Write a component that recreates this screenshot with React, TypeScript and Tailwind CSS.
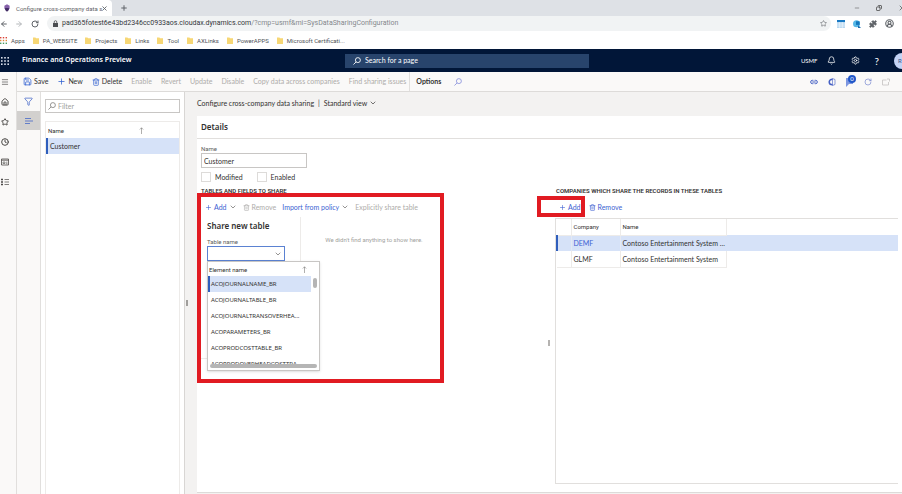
import { useState } from "react";
import type { ReactNode } from "react";
import {
  ArrowLeft,
  ArrowRight,
  Bell,
  ChevronDown,
  CircleUserRound,
  Clock,
  Copy,
  Funnel,
  House,
  Link2,
  Menu,
  Minus,
  Plus,
  Puzzle,
  RotateCw,
  Save,
  Settings,
  Star,
  Trash2,
  X,
} from "lucide-react";

const bookmarks = [
  "PA_WEBSITE",
  "Projects",
  "Links",
  "Tool",
  "AXLinks",
  "PowerAPPS",
  "Microsoft Certificati...",
];

const disabledCommands = [
  "Enable",
  "Revert",
  "Update",
  "Disable",
  "Copy data across companies",
  "Find sharing issues",
];

const elements = [
  "ACOJOURNALNAME_BR",
  "ACOJOURNALTABLE_BR",
  "ACOJOURNALTRANSOVERHEA...",
  "ACOPARAMETERS_BR",
  "ACOPRODCOSTTABLE_BR",
  "ACOPRODOVERHEADCOSTTRA...",
];

const companies = [
  { id: "DEMF", name: "Contoso Entertainment System ..." },
  { id: "GLMF", name: "Contoso Entertainment System" },
];

const dots = [0, 4, 8];

const Waffle: React.FunctionComponent<{ colors: string[]; size: number }> = (
  props
) => (
  <svg viewBox="0 0 10 10" width={props.size} height={props.size}>
    {dots.map((y, row) =>
      dots.map((x) => (
        <rect
          key={`${x}-${y}`}
          x={x}
          y={y}
          width="2"
          height="2"
          fill={props.colors[row]}
        />
      ))
    )}
  </svg>
);

const FolderIcon = () => (
  <svg viewBox="0 0 6 7" width="6" height="7">
    <path d="M0 .5h2.4l.8.8H6V7H0z" fill="#f7d775" />
  </svg>
);

const MagnifierIcon: React.FunctionComponent<{ className?: string }> = (
  props
) => (
  <svg
    viewBox="0 0 9 9"
    width="8"
    height="8"
    fill="none"
    stroke="currentColor"
    className={props.className}
  >
    <circle cx="5.5" cy="3.5" r="2.8" />
    <path d="M3.5 5.5.5 8.5" />
  </svg>
);

const SortArrow = () => (
  <svg viewBox="0 0 5 7" width="5" height="7" fill="none" stroke="#605e5c">
    <path d="M2.5 7V.8M.8 2.5 2.5.8l1.7 1.7" strokeWidth=".5" />
  </svg>
);

const BrowserChrome = () => (
  <header className="font-['Roboto',sans-serif] text-[6px] text-[#5f6368]">
    <div className="flex h-4 items-center bg-[#dee1e6]">
      <div className="flex h-4 w-28 items-center gap-1.5 rounded-tr bg-white px-1">
        <svg viewBox="0 0 8 10" width="6" height="8">
          <path d="M4 0 7.5 2v4L4 8 .5 6V2z" fill="#8560a9" />
          <path d="M1.5 5h5v2.5L4 10 1.5 7.5z" fill="#412a63" />
        </svg>
        <span className="min-w-0 flex-1 whitespace-nowrap">
          Configure cross-company data s
        </span>
        <button aria-label="Close tab">
          <X size={7} strokeWidth={3} />
        </button>
      </div>
      <button className="ml-2" aria-label="New tab">
        <Plus size={8} strokeWidth={3} />
      </button>
      <div className="ml-auto flex items-center gap-4 pl-4 text-[#444]">
        <button aria-label="Minimize">
          <Minus size={6} />
        </button>
        <button aria-label="Restore">
          <Copy size={6} strokeWidth={3} className="-scale-x-100" />
        </button>
        <button className="-mr-1" aria-label="Close">
          <X size={8} />
        </button>
      </div>
    </div>
    <div className="flex h-[15px] items-center bg-white">
      <button aria-label="Back">
        <ArrowLeft size={8} strokeWidth={3} />
      </button>
      <button className="ml-[7px] text-[#b5b8bb]" aria-label="Forward">
        <ArrowRight size={8} strokeWidth={3} />
      </button>
      <button className="ml-2" aria-label="Reload">
        <RotateCw size={8} strokeWidth={3} />
      </button>
      <div className="ml-2 flex h-full flex-1 items-center gap-1 rounded-full bg-[#f1f3f4] pl-1.5 pr-1">
        <svg viewBox="0 0 5 7" width="5" height="7">
          <path d="M0 3h5v4H0z" fill="#4a4d51" />
          <path d="M1.2 3V2a1.3 1.3 0 0 1 2.6 0v1" fill="none" stroke="#4a4d51" strokeWidth=".8" />
        </svg>
        <span className="flex-1 whitespace-nowrap text-[7px] text-[#84888c]">
          <span className="text-[#33373b]">
            pad365fotest6e43bd2346cc0933aos.cloudax.dynamics.com
          </span>
          /?cmp=usmf&amp;mi=SysDataSharingConfiguration
        </span>
        <Star size={7} />
      </div>
      <div className="ml-1.5 mr-2 flex items-center gap-2">
        <svg viewBox="0 0 8 8" width="8" height="8">
          <path d="M0 0h8v8H0z" fill="#b8d8f1" />
          <path d="M0 0h8v2H0z" fill="#1879c4" />
          <path d="M2.7 2v6M5.3 2v6M0 4h8M0 6h8" stroke="#fff" strokeWidth=".5" />
        </svg>
        <svg viewBox="0 0 8 8" width="8" height="8">
          <circle cx="3.5" cy="3.8" r="3.5" fill="#55b7e6" />
          <path d="M3 1.3h3.6v3.6H3z" fill="#1477bd" />
          <path d="m5 5 3 3H5z" fill="#1d6fb3" />
        </svg>
        <Puzzle size={8} fill="#5f6368" />
        <CircleUserRound size={9} strokeWidth={3} />
      </div>
    </div>
    <nav className="flex h-[18px] items-center gap-2 bg-white text-[#4d5156]">
      <a href="#apps" className="flex items-center gap-1">
        <Waffle size={7} colors={["#db4437", "#e08a3c", "#4a9b62"]} />
        Apps
      </a>
      {bookmarks.map((name) => (
        <a key={name} href="#bookmark" className="flex items-center gap-1">
          <FolderIcon />
          {name}
        </a>
      ))}
    </nav>
  </header>
);

const AppHeader = () => (
  <div className="flex h-[23px] items-center bg-[#011638] text-white">
    <button className="w-[22px] pl-px" aria-label="App launcher">
      <Waffle size={8} colors={["#d9dfeb", "#d9dfeb", "#d9dfeb"]} />
    </button>
    <h1 className="flex-1 font-['Noto_Sans',sans-serif] font-semibold">
      Finance and Operations Preview
    </h1>
    <label className="flex h-3.5 w-[244px] items-center gap-1 bg-[#28446c] pl-2">
      <MagnifierIcon />
      <input
        className="min-w-0 flex-1 outline-none placeholder:text-white"
        placeholder="Search for a page"
        aria-label="Search for a page"
      />
    </label>
    <div className="flex w-[313px] items-center justify-end gap-[15px]">
      <span className="-mr-1.5 text-[6px]">USMF</span>
      <button aria-label="Notifications">
        <Bell size={9} />
      </button>
      <button aria-label="Settings">
        <Settings size={9} />
      </button>
      <button className="text-[10px] leading-none" aria-label="Help">
        ?
      </button>
      <button className="-mr-2 h-4 w-4 rounded-full bg-[#c3d3f5] pl-1 text-left text-[6px] text-[#3c5486]">
        R
      </button>
    </div>
  </div>
);

const NavRail = () => (
  <nav className="flex w-[17px] shrink-0 flex-col items-start border-r border-[#e1dfdd] bg-[#faf9f8] pt-1.5 text-[#4c4a48]">
    <button className="mb-3 pl-px" aria-label="Expand navigation">
      <Menu size={8} />
    </button>
    <div className="flex flex-col gap-3 pl-px">
      <button aria-label="Home">
        <House size={8} strokeWidth={3} />
      </button>
      <button aria-label="Favorites">
        <Star size={8} strokeWidth={3} />
      </button>
      <button aria-label="Recent">
        <Clock size={8} strokeWidth={3} />
      </button>
      <button aria-label="Workspaces">
        <svg viewBox="0 0 8 8" width="8" height="8" fill="none" stroke="currentColor">
          <path d="M.5 1h7v6h-7zM.5 2.2h7" strokeWidth=".8" />
          <path d="M2 4h2v1.5H2zM5 4.2h1.5M5 5.7h1.5" strokeWidth=".6" />
        </svg>
      </button>
      <button aria-label="Modules">
        <svg viewBox="0 0 8 8" width="8" height="8" stroke="currentColor">
          <path d="M0 1.5h2M0 4h2M0 6.5h2" strokeWidth="1.6" />
          <path d="M3.5 1.5H8M3.5 4H8M3.5 6.5H8" strokeWidth=".7" />
        </svg>
      </button>
    </div>
  </nav>
);

interface CommandProps {
  icon?: ReactNode;
  disabled?: boolean;
  menu?: boolean;
  children: ReactNode;
}

const Command: React.FunctionComponent<CommandProps> = (props) => (
  <button
    disabled={props.disabled}
    className="flex items-center gap-0.5 whitespace-nowrap disabled:text-[#aeacaa]"
  >
    {props.icon}
    {props.children}
    {props.menu && <ChevronDown size={8} className="text-[#605e5c]" />}
  </button>
);

const CommandBar = () => (
  <div className="flex h-5 items-center gap-[9px] border-b border-[#dddbd9] bg-[#faf9f8] pl-1.5 text-[#323130]">
    <Command icon={<Save size={9} className="text-[#2f5fd0]" />}>Save</Command>
    <Command icon={<Plus size={9} className="text-[#2f5fd0]" />}>New</Command>
    <Command icon={<Trash2 size={8} className="text-[#2f5fd0]" />}>
      Delete
    </Command>
    {disabledCommands.map((label) => (
      <Command key={label} disabled>
        {label}
      </Command>
    ))}
    <button className="-ml-1.5 border-l border-[#e1dfdd] py-1 pl-1.5 font-bold">
      Options
    </button>
    <button className="ml-1" aria-label="Search commands">
      <MagnifierIcon className="text-[#8f97dd]" />
    </button>
    <div className="ml-auto flex items-center gap-2.5 pr-3 text-[#4560c4]">
      <button aria-label="Copy link">
        <Link2 size={8} strokeWidth={3} />
      </button>
      <button aria-label="Office">
        <svg viewBox="0 0 8 8" width="8" height="8" fill="none" stroke="currentColor">
          <path d="M4.5 1.2C2.5 1.2 1.2 2.5 1.2 4s1.3 2.8 3.3 2.8" strokeWidth="1.5" />
          <path d="M4.5.5 7 1.5v5L4.5 7.5z" strokeWidth=".6" />
        </svg>
      </button>
      <button className="relative" aria-label="Messages">
        <svg viewBox="0 0 8 10" width="8" height="10">
          <path d="M0 1h7v6H3L0 10z" fill="#7d97e0" />
        </svg>
        <span className="absolute -top-0.5 left-0.5 h-2 w-2 rounded-full bg-[#1f56c8] text-center text-[6px] leading-2 text-white">
          0
        </span>
      </button>
      <button className="text-[#7384cf]" aria-label="Refresh">
        <RotateCw size={8} />
      </button>
      <button className="text-[#c4c2c0]" aria-label="Open in new window">
        <svg viewBox="0 0 8 8" width="8" height="8" fill="none" stroke="currentColor">
          <path d="M4.5 2H.5v5h6V4M5 1h2.5v2.5" strokeWidth=".8" />
        </svg>
      </button>
    </div>
  </div>
);

const ListPane = () => (
  <>
    <div className="flex w-6 shrink-0 flex-col border-r border-[#e1dfdd] bg-[#faf9f8] text-[#4668c8]">
      <button className="flex h-[19px] items-center justify-center" aria-label="Filter pane">
        <Funnel size={9} />
      </button>
      <button className="flex h-[19px] items-center justify-center bg-[#d2d0ce]" aria-label="List pane">
        <svg viewBox="0 0 8 6" width="8" height="6" stroke="currentColor">
          <path d="M0 .5h6M0 3h8M0 5.5h5" strokeWidth=".8" />
        </svg>
      </button>
    </div>
    <aside className="flex w-36 shrink-0 flex-col border-r border-[#d8d6d4] bg-white px-1">
      <label className="mt-[7px] flex h-3.5 items-center gap-0.5 border border-[#c8c6c4] pl-0.5 text-[#8a8886]">
        <MagnifierIcon />
        <input
          className="min-w-0 flex-1 outline-none placeholder:text-[#a19f9d]"
          placeholder="Filter"
          aria-label="Filter"
        />
      </label>
      <div className="mt-2 flex-1 border border-b-0 border-[#edebe9]">
        <table className="w-full text-left">
          <thead className="font-['Roboto',sans-serif] text-[6px]">
            <tr className="h-4">
              <th className="pl-px font-normal">Name</th>
              <th className="w-10">
                <SortArrow />
              </th>
            </tr>
          </thead>
          <tbody>
            <tr className="h-4 bg-[#d6e2f8] leading-3">
              <td colSpan={2} className="border-l-2 border-[#2f5ebc] pl-0.5">
                Customer
              </td>
            </tr>
          </tbody>
        </table>
      </div>
    </aside>
  </>
);

const ElementPicker = () => {
  const [selected, setSelected] = useState(elements[0]);

  return (
    <div className="absolute left-0 top-full z-10 w-[113px] border border-[#c8c6c4] bg-white pb-0.5 shadow">
      <div className="flex h-3.5 items-center justify-between pl-px pr-3 font-['Roboto',sans-serif] text-[6px]">
        <span>Element name</span>
        <SortArrow />
      </div>
      <div className="flex font-['Noto_Sans',sans-serif] text-[6px]">
        <ul className="h-[88px] min-w-0 flex-1 overflow-hidden" role="listbox" aria-label="Element name">
          {elements.map((name) => (
            <li
              key={name}
              role="option"
              aria-selected={name === selected}
              onClick={() => setSelected(name)}
              className="h-4 whitespace-nowrap border-l-2 border-transparent pl-px leading-4 aria-selected:border-[#2f5ebc] aria-selected:bg-[#d6e2f8]"
            >
              {name}
            </li>
          ))}
        </ul>
        <div className="w-2 pl-0.5 pt-0.5">
          <div className="h-2.5 w-1 rounded-sm bg-[#b5b5b5]" />
        </div>
      </div>
      <div className="mx-0.5 h-1 rounded-sm bg-[#b5b5b5]" />
    </div>
  );
};

const TablesToShare = () => (
  <section className="relative flex w-[342px] flex-col">
    <h3 className="h-3 font-['Roboto',sans-serif] text-[6px] font-semibold leading-3">
      TABLES AND FIELDS TO SHARE
    </h3>
    <div className="flex h-5 items-center gap-1.5 pl-1 text-[#3d5fd2]">
      <Command menu icon={<Plus size={7} />}>
        Add
      </Command>
      <Command disabled icon={<Trash2 size={7} />}>
        Remove
      </Command>
      <Command menu>Import from policy</Command>
      <Command disabled>Explicitly share table</Command>
    </div>
    <div className="flex">
      <div className="h-[142px] w-[100px] border-b border-r border-[#edebe9] pl-1.5">
        <h2 className="mt-[3px] font-['Noto_Sans',sans-serif] text-[8px] font-semibold leading-3">
          Share new table
        </h2>
        <label
          htmlFor="tableName"
          className="mt-1.5 block font-['Roboto',sans-serif] text-[6px] leading-2 text-[#605e5c]"
        >
          Table name
        </label>
        <div className="relative w-[78px]">
          <div className="flex h-[15px] items-center border border-[#5b82d2] pr-0.5">
            <input
              id="tableName"
              role="combobox"
              aria-expanded="true"
              className="min-w-0 flex-1 outline-none"
            />
            <ChevronDown size={8} className="text-[#605e5c]" />
          </div>
          <ElementPicker />
        </div>
      </div>
      <p className="w-[146px] pt-[18px] text-center font-['Roboto',sans-serif] text-[6px] text-[#a19f9d]">
        We didn't find anything to show here.
      </p>
    </div>
    <div className="pointer-events-none absolute -left-1 top-2 h-[190px] w-[247px] border-4 border-[#e11b22]" />
  </section>
);

const CompaniesGrid = () => (
  <section className="flex flex-1 flex-col">
    <h3 className="h-3 pl-px font-['Roboto',sans-serif] text-[6px] font-semibold leading-3">
      COMPANIES WHICH SHARE THE RECORDS IN THESE TABLES
    </h3>
    <div className="relative flex h-[21px] items-center gap-2 pl-1 text-[#3d5fd2]">
      <Command icon={<Plus size={7} />}>Add</Command>
      <Command icon={<Trash2 size={7} />}>Remove</Command>
      <div className="pointer-events-none absolute -left-[18px] -top-px h-[21px] w-12 border-4 border-[#e11b22]" />
    </div>
    <div className="flex-1 border-b border-l border-t border-[#e1dfdd]">
      <table className="w-full table-fixed text-left leading-3">
        <thead className="font-['Roboto',sans-serif] text-[6px]">
          <tr className="h-4">
            <th className="w-3.5 border-b border-r border-[#edebe9]" />
            <th className="w-[49px] border-b border-r border-[#edebe9] pl-0.5 font-normal">
              Company
            </th>
            <th className="w-[106px] border-b border-r border-[#edebe9] pl-0.5 font-normal">
              Name
            </th>
            <th />
          </tr>
        </thead>
        <tbody>
          {companies.map((company, index) => (
            <tr
              key={company.id}
              className={index === 0 ? "h-4 bg-[#d6e2f8]" : "h-4"}
            >
              <td
                className={
                  index === 0
                    ? "border-l-2 border-r border-l-[#2f5ebc] border-r-[#e5e9f2]"
                    : "border-b border-r border-[#edebe9]"
                }
              />
              <td
                className={
                  index === 0
                    ? "border-r border-[#e5e9f2] pl-0.5 text-[#3d5fd2]"
                    : "border-b border-r border-[#edebe9] pl-0.5"
                }
              >
                {company.id}
              </td>
              <td
                className={
                  index === 0
                    ? "whitespace-nowrap pl-0.5"
                    : "whitespace-nowrap border-b border-r border-[#edebe9] pl-0.5"
                }
              >
                {company.name}
              </td>
              <td />
            </tr>
          ))}
        </tbody>
      </table>
    </div>
  </section>
);

const DetailsForm = () => (
  <main className="flex min-w-0 flex-1 flex-col pl-1.5">
    <div className="flex h-6 items-center gap-1 pb-0.5">
      <span>Configure cross-company data sharing</span>
      <span>|</span>
      <button className="flex items-center gap-0.5">
        Standard view
        <ChevronDown size={8} />
      </button>
    </div>
    <div className="mb-px flex flex-1 flex-col border-b border-[#dddbd9] bg-white">
      <h2 className="h-[23px] border-b border-[#e1dfdd] pl-1 font-['Noto_Sans',sans-serif] text-[8px] font-semibold leading-[22px]">
        Details
      </h2>
      <div className="flex flex-1 flex-col pb-2 pl-1 pr-1">
        <label
          htmlFor="ruleName"
          className="mt-1.5 block h-2 font-['Roboto',sans-serif] text-[6px] leading-2 text-[#605e5c]"
        >
          Name
        </label>
        <input
          id="ruleName"
          defaultValue="Customer"
          className="h-[15px] w-[106px] border border-[#c8c6c4] pl-0.5 outline-none"
        />
        <div className="mt-1 flex h-2.5 gap-3.5">
          {["Modified", "Enabled"].map((label) => (
            <label key={label} className="flex items-center gap-1">
              <input
                type="checkbox"
                className="h-2.5 w-2.5 appearance-none border border-[#dddbd9] checked:bg-[#2f5ebc]"
              />
              {label}
            </label>
          ))}
        </div>
        <div className="mt-[3px] flex flex-1">
          <TablesToShare />
          <div className="flex w-3 flex-col items-center justify-center pt-4">
            <div className="h-1.5 w-0.5 bg-[#b5b3b1]" />
          </div>
          <CompaniesGrid />
        </div>
      </div>
    </div>
  </main>
);

const App = () => (
  <div className="flex min-h-screen flex-col overflow-hidden bg-[#f3f2f1] font-['Lato',sans-serif] text-[7px] text-[#323130]">
    <BrowserChrome />
    <AppHeader />
    <div className="flex flex-1">
      <NavRail />
      <div className="flex min-w-0 flex-1 flex-col">
        <CommandBar />
        <div className="flex flex-1">
          <ListPane />
          <div className="flex w-1.5 shrink-0 items-center pl-px pt-5">
            <div className="h-1.5 w-0.5 bg-[#a19f9d]" />
          </div>
          <DetailsForm />
        </div>
      </div>
    </div>
  </div>
);

export default App;
